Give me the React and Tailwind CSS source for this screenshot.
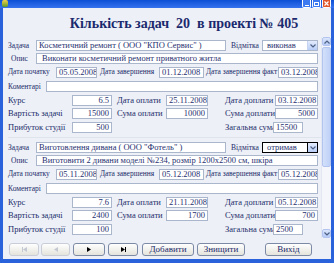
import React from "react";

const FONT = "[font-family:'Liberation_Serif','Times_New_Roman',serif]";

function Label({ children, big, className = "" }) {
  return (
    <span className={`${big ? "text-[8.5px]" : "text-[7.5px]"} leading-none text-[#1c2b6b] whitespace-nowrap ${className}`}>
      {children}
    </span>
  );
}

function Cell({ children, className = "" }) {
  return <div className={`flex items-center h-full ${className}`}>{children}</div>;
}

function Box({ children, className = "", align = "left" }) {
  const al = align === "right" ? "justify-end" : align === "center" ? "justify-center" : "justify-start";
  return (
    <div
      className={`h-[11px] bg-white border border-[#aab6cc] flex items-center ${al} px-[2px] text-[8.5px] leading-none text-[#1f2f70] whitespace-nowrap overflow-hidden ${className}`}
    >
      {children}
    </div>
  );
}

function DropBtn({ dark }) {
  return (
    <div
      className={`w-[10px] h-full flex items-center justify-center bg-gradient-to-b from-[#e3ecfd] to-[#b9cdf6] ${dark ? "border-l border-black" : "border-l border-[#c6d4f2]"}`}
    >
      <svg width="6" height="4" viewBox="0 0 6 4">
        <path d="M0.5 0.5 L3 3 L5.5 0.5" fill="none" stroke="#4d6185" strokeWidth="1.2" />
      </svg>
    </div>
  );
}

function Combo({ value, dark }) {
  return (
    <div
      className={`h-[11px] w-[56px] bg-white flex items-stretch ${dark ? "border border-black" : "border border-[#aab6cc]"}`}
    >
      <div className="flex-1 flex items-center pl-[4px] text-[8.5px] leading-none text-[#1f2f70]">{value}</div>
      <DropBtn dark={dark} />
    </div>
  );
}

function Record({ r }) {
  return (
    <div className="flex flex-col">
      <div className="flex items-center h-[13px]">
        <Cell className="w-[28px]"><Label>Задача</Label></Cell>
        <Box className="w-[190px]">{r.task}</Box>
        <Cell className="w-[36px] pl-[5px]"><Label>Відмітка</Label></Cell>
        <Combo value={r.mark} dark={r.dark} />
      </div>
      <div className="flex items-center h-[13px]">
        <Cell className="w-[28px] pl-[3px]"><Label>Опис</Label></Cell>
        <Box className="w-[282px] pl-[5px]">{r.desc}</Box>
      </div>
      <div className="flex items-center h-[14px]">
        <Cell className="w-[48px]"><Label>Дата початку</Label></Cell>
        <Box className="w-[41px]">{r.start}</Box>
        <Cell className="w-[62px] pl-[3px]"><Label>Дата завершення</Label></Cell>
        <Box className="w-[45px]">{r.end}</Box>
        <Cell className="w-[74px] pl-[2px]"><Label>Дата завершення факт</Label></Cell>
        <Box className="w-[40px]">{r.endFact}</Box>
      </div>
      <div className="flex items-center h-[15px]">
        <Cell className="w-[38px]"><Label>Коментарі</Label></Cell>
        <Box className="w-[272px]"></Box>
      </div>
      <div className="flex items-center h-[13px]">
        <Cell className="w-[64px]"><Label big>Курс</Label></Cell>
        <Box className="w-[40px]" align="right">{r.rate}</Box>
        <Cell className="w-[54px] pl-[5px]"><Label big>Дата оплати</Label></Cell>
        <Box className="w-[42px]">{r.payDate}</Box>
        <Cell className="w-[67px] pl-[17px]"><Label big>Дата доплати</Label></Cell>
        <Box className="w-[43px]">{r.extraDate}</Box>
      </div>
      <div className="flex items-center h-[13px]">
        <Cell className="w-[64px]"><Label big>Вартість задачі</Label></Cell>
        <Box className="w-[40px]" align="right">{r.cost}</Box>
        <Cell className="w-[54px] pl-[5px]"><Label big>Сума оплати</Label></Cell>
        <Box className="w-[42px]" align="right">{r.paid}</Box>
        <Cell className="w-[67px] pl-[17px]"><Label big>Сума доплати</Label></Cell>
        <Box className="w-[43px]" align="right">{r.extra}</Box>
      </div>
      <div className="flex items-center h-[14px]">
        <Cell className="w-[64px]"><Label big>Прибуток студії</Label></Cell>
        <Box className="w-[40px]" align="right">{r.profit}</Box>
        <Cell className="w-[54px]"></Cell>
        <Cell className="w-[42px]"></Cell>
        <Cell className="w-[65px] pl-[17px]"><Label big>Загальна сума</Label></Cell>
        <Box className="w-[30px]">{r.total}</Box>
      </div>
    </div>
  );
}

function NavBtn({ children, disabled, className = "" }) {
  return (
    <div
      className={`h-[13px] rounded-[3px] flex items-center justify-center bg-gradient-to-b from-[#ffffff] to-[#e4e3dc] ${disabled ? "border border-[#c9cdd8]" : "border border-[#7d8aa6]"} ${className}`}
    >
      {children}
    </div>
  );
}

function Tri({ dir = "r", color = "#000" }) {
  return dir === "r" ? (
    <svg width="4" height="5" viewBox="0 0 4 5"><path d="M0 0 L4 2.5 L0 5 Z" fill={color} /></svg>
  ) : (
    <svg width="4" height="5" viewBox="0 0 4 5"><path d="M4 0 L0 2.5 L4 5 Z" fill={color} /></svg>
  );
}

function Bar({ dim }) {
  return <div className={`w-[1px] h-[5px] ${dim ? "bg-[#c4c8d2]" : "bg-black"}`} />;
}

export default function App() {
  const recs = [
    {
      task: "Косметичний ремонт ( ООО \"КПО Сервис\" )",
      mark: "виконав",
      desc: "Виконати косметичний ремонт приватного житла",
      start: "05.05.2008",
      end: "01.12.2008",
      endFact: "03.12.2008",
      rate: "6.5",
      payDate: "25.11.2008",
      extraDate: "03.12.2008",
      cost: "15000",
      paid: "10000",
      extra: "5000",
      profit: "500",
      total: "15500",
    },
    {
      task: "Виготовлення дивана ( ООО \"Фотель\" )",
      mark: "отримав",
      dark: true,
      desc: "Виготовити 2 дивани моделі №234, розмір 1200х2500 см,  шкіра",
      start: "05.11.2008",
      end: "05.12.2008",
      endFact: "05.12.2008",
      rate: "7.6",
      payDate: "21.11.2008",
      extraDate: "05.12.2008",
      cost: "2400",
      paid: "1700",
      extra: "700",
      profit: "100",
      total: "2500",
    },
  ];

  return (
    <div className={`w-[334px] h-[263px] overflow-hidden flex flex-col bg-[#2a62dc] ${FONT}`}>
      {/* title bar (cropped) */}
      <div className="h-[8px] flex items-end justify-between bg-gradient-to-b from-[#0b4fd6] to-[#3472ee] px-[2px]">
        <div className="w-[6px] h-[7px] mb-[1px] rounded-[2px] bg-gradient-to-b from-[#f3d24a] to-[#5a9a2c]" />
        <div className="flex items-end gap-[1px] mr-[1px]">
          <div className="w-[9px] h-[8px] rounded-b-[2px] bg-[#3d7af2] border border-t-0 border-white flex items-end justify-center pb-[1px]">
            <div className="w-[4px] h-[1px] bg-white" />
          </div>
          <div className="w-[9px] h-[8px] rounded-b-[2px] bg-[#3d7af2] border border-t-0 border-white flex items-center justify-center">
            <div className="w-[5px] h-[4px] border border-white" />
          </div>
          <div className="w-[9px] h-[8px] rounded-b-[2px] bg-[#e0572d] border border-t-0 border-white flex items-center justify-center">
            <svg width="5" height="5" viewBox="0 0 5 5"><path d="M0.5 0.5 L4.5 4.5 M4.5 0.5 L0.5 4.5" stroke="#fff" strokeWidth="1.2" /></svg>
          </div>
        </div>
      </div>

      <div className="flex-1 flex px-[3px] pb-[4px]">
        <div className="flex-1 flex flex-col bg-[#edf0f6]">
          {/* header */}
          <div className="h-[29px] flex items-center justify-center pl-[34px] pt-[2px]">
            <span className="text-[14px] font-bold text-[#1b2a6e] whitespace-pre leading-none">
              Кількість задач  20  в проекті № 405
            </span>
          </div>

          {/* detail */}
          <div className="h-[201px] flex">
            <div className="flex-1 pl-[5px] pt-[2px] flex flex-col overflow-hidden">
              <Record r={recs[0]} />
              <div className="h-[7px] flex items-center">
                <div className="w-full h-[1px] bg-[#dfe3ec]" />
              </div>
              <Record r={recs[1]} />
            </div>
            {/* scrollbar */}
            <div className="w-[10px] flex flex-col bg-[#f4f6fc] border-l border-[#e2e7f3]">
              <div className="h-[9px] rounded-[2px] bg-gradient-to-b from-[#dbe6fd] to-[#b7cbf6] border border-[#b3c5ef] flex items-center justify-center">
                <svg width="6" height="4" viewBox="0 0 6 4"><path d="M0.5 3.5 L3 1 L5.5 3.5" fill="none" stroke="#4d6185" strokeWidth="1.2" /></svg>
              </div>
              <div className="h-[120px] mt-[1px] rounded-[2px] bg-gradient-to-r from-[#d3e0fb] to-[#bfd1f7] border border-[#b3c5ef]" />
              <div className="flex-1" />
              <div className="h-[9px] rounded-[2px] bg-gradient-to-b from-[#dbe6fd] to-[#b7cbf6] border border-[#b3c5ef] flex items-center justify-center">
                <svg width="6" height="4" viewBox="0 0 6 4"><path d="M0.5 0.5 L3 3 L5.5 0.5" fill="none" stroke="#4d6185" strokeWidth="1.2" /></svg>
              </div>
            </div>
          </div>

          {/* footer */}
          <div className="flex-1 flex items-start pt-[5px] pl-[6px]">
            <NavBtn disabled className="w-[30px]">
              <Bar dim /><Tri dir="l" color="#c4c8d2" />
            </NavBtn>
            <NavBtn disabled className="w-[29px] ml-[2px]">
              <Tri dir="l" color="#c4c8d2" />
            </NavBtn>
            <NavBtn className="w-[32px] ml-[3px]">
              <Tri dir="r" />
            </NavBtn>
            <NavBtn className="w-[30px] ml-[3px]">
              <Tri dir="r" /><Bar />
            </NavBtn>
            <NavBtn className="w-[52px] ml-[4px]">
              <span className="text-[9px] leading-none text-[#1c2b6b]">Добавити</span>
            </NavBtn>
            <NavBtn className="w-[48px] ml-[3px]">
              <span className="text-[9px] leading-none text-[#1c2b6b]">Знищити</span>
            </NavBtn>
            <NavBtn className="w-[47px] ml-[20px]">
              <span className="text-[9px] leading-none text-[#1c2b6b]">Вихід</span>
            </NavBtn>
          </div>
        </div>
      </div>
    </div>
  );
}
